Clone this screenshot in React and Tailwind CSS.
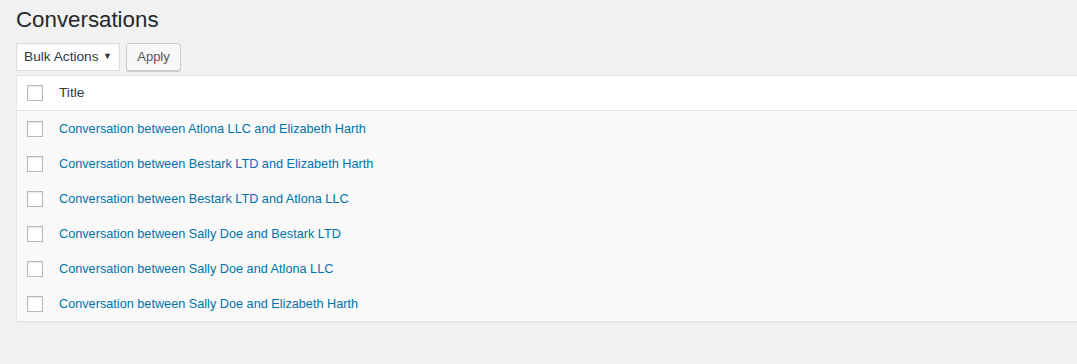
import React from "react";

const conversations = [
  "Conversation between Atlona LLC and Elizabeth Harth",
  "Conversation between Bestark LTD and Elizabeth Harth",
  "Conversation between Bestark LTD and Atlona LLC",
  "Conversation between Sally Doe and Bestark LTD",
  "Conversation between Sally Doe and Atlona LLC",
  "Conversation between Sally Doe and Elizabeth Harth",
];

const Checkbox = () => (
  <span className="block w-4 h-4 bg-white border border-[#b4b9be] shadow-[inset_0_1px_2px_rgba(0,0,0,0.1)]" />
);

export default function App() {
  return (
    <div className="min-h-[364px] bg-[#f1f1f1] overflow-hidden font-['Liberation_Sans',Arial,sans-serif] text-[#444]">
      <div className="pl-4">
        {/* Header */}
        <h1 className="pt-[5px] text-[22.3px] leading-[29px] text-[#23282d] font-normal">
          Conversations
        </h1>

        {/* Bulk actions */}
        <div className="flex items-center gap-[6px] mt-[9px]">
          <div className="flex items-center justify-between w-[104px] h-[28px] pl-[7px] pr-[7px] bg-white border border-[#ddd] shadow-[inset_0_1px_2px_rgba(0,0,0,0.07)] text-[13.7px] text-[#32373c]">
            <span className="pt-px">Bulk Actions</span>
            <span className="text-[9px] text-[#333]">▼</span>
          </div>
          <button className="h-[28px] w-[55px] bg-[#f7f7f7] border border-[#ccc] rounded-[3px] shadow-[0_1px_0_#ccc] text-[13px] text-[#555]">
            Apply
          </button>
        </div>

        {/* Table */}
        <div className="mt-[4px] border-l border-t border-b border-[#e5e5e5] shadow-[0_1px_1px_rgba(0,0,0,0.04)]">
          <div className="flex items-center h-[35px] bg-white border-b border-[#e1e1e1]">
            <div className="w-[42px] pl-[10px]">
              <Checkbox />
            </div>
            <span className="pt-px text-[13.7px] text-[#32373c]">Title</span>
          </div>
          {conversations.map((title) => (
            <div key={title} className="flex items-center h-[35px] bg-[#f9f9f9]">
              <div className="w-[42px] pl-[10px]">
                <Checkbox />
              </div>
              <a className="pt-[2px] text-[12.7px] text-[#0073aa] cursor-pointer">{title}</a>
            </div>
          ))}
        </div>
      </div>
    </div>
  );
}
